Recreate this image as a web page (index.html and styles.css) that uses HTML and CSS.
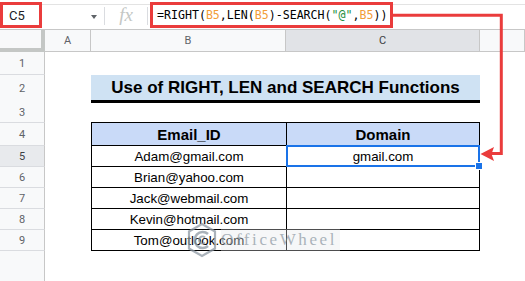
FILE: index.html
```html
<!DOCTYPE html>
<html>
<head>
<meta charset="utf-8">
<link rel="stylesheet" href="styles.css">
</head>
<body>
<div class="app">
  <div class="fbar">
    <div class="namebox">C5</div>
    <div class="dd"><span class="caret"></span></div>
    <div class="sep"></div>
    <div class="fx">fx</div>
    <div class="sep"></div>
    <div class="formula">=RIGHT(<span class="ref">B5</span>,LEN(<span class="ref">B5</span>)-SEARCH(<span class="str">"@"</span>,<span class="ref">B5</span>))</div>
  </div>
  <div class="sheet">
    <div class="row hdr"><div class="corner"></div><div class="ch">A</div><div class="ch">B</div><div class="ch sel">C</div><div class="ch"></div></div>
    <div class="row r1"><div class="rh">1</div></div>
    <div class="row r2"><div class="rh">2</div><div></div><div class="title">Use of RIGHT, LEN and SEARCH Functions</div></div>
    <div class="row r3"><div class="rh">3</div><div></div><div class="tb"></div><div class="tb"></div></div>
    <div class="row r4"><div class="rh">4</div><div></div><div class="tc th">Email_ID</div><div class="tc th c">Domain</div></div>
    <div class="row r5"><div class="rh on">5</div><div></div><div class="tc">Adam@gmail.com</div><div class="tc c active">gmail.com<span class="handle"></span></div></div>
    <div class="row r5"><div class="rh">6</div><div></div><div class="tc">Brian@yahoo.com</div><div class="tc c"></div></div>
    <div class="row r5"><div class="rh">7</div><div></div><div class="tc">Jack@webmail.com</div><div class="tc c"></div></div>
    <div class="row r5"><div class="rh">8</div><div></div><div class="tc">Kevin@hotmail.com</div><div class="tc c"></div></div>
    <div class="row r5"><div class="rh">9</div><div></div><div class="tc">Tom@outlook.com</div><div class="tc c"></div></div>
    <div class="row r10"><div class="rh last"></div></div>
  </div>
  <svg class="arrow" width="525" height="281" viewBox="0 0 525 281">
    <path d="M393 15.3 H501.3 V153.4 H490" fill="none" stroke="#ea3c3c" stroke-width="3"/>
    <polygon points="480.5,154 494,147 491.5,154 494,161" fill="#ea3c3c"/>
  </svg>
  <div class="watermark">
    <svg class="wlogo" width="32" height="36" viewBox="0 0 32 36">
      <path d="M16 2 L29 9.5 V26.5 L16 34 L3 26.5 V9.5 Z" fill="none" stroke="#8e99a4" stroke-width="2.2"/>
      <path d="M22 12 A8 8 0 1 0 22 24" fill="none" stroke="#8e99a4" stroke-width="2.6"/>
      <path d="M19 15.5 A3.5 3.5 0 1 0 19 20.5" fill="none" stroke="#8e99a4" stroke-width="2"/>
    </svg>
    <span class="wtext">OfficeWheel</span>
  </div>
</div>
</body>
</html>
```
FILE: styles.css
```css
* { box-sizing: border-box; margin: 0; padding: 0; }
body { margin: 0; background: #fff; font-family: "Liberation Sans", Arial, sans-serif; }
.app { position: relative; width: 525px; height: 281px; overflow: hidden; background: #fff; }

.fbar {
  display: flex; align-items: flex-start; height: 30px; padding-top: 2px;
  border-bottom: 1px solid #c7c7c7;
  background: linear-gradient(#e3e3e3, #e3e3e3) 0 4px / 100% 1px no-repeat;
}
.namebox {
  width: 42px; height: 26px; border: 3px solid #ea3c3c; background: #fff;
  font: 13px Roboto, "Liberation Sans", sans-serif; color: #202124;
  padding-left: 6px; display: flex; align-items: center;
}
.dd { width: 62px; height: 26px; display: flex; align-items: center; justify-content: flex-end; padding-right: 7px; }
.caret { width: 0; height: 0; border-left: 3.5px solid transparent; border-right: 3.5px solid transparent; border-top: 4px solid #5f6368; margin-top: 3px; }
.sep { width: 1px; height: 18px; margin-top: 5px; background: #dadce0; }
.fx {
  width: 42px; height: 26px; display: flex; align-items: center; justify-content: center;
  font: italic 19px "Liberation Serif", serif; color: #c4c7c5;
}
.formula {
  margin-left: 2px; width: 243px; height: 26px; border: 3px solid #ea3c3c; background: #fff;
  padding-left: 4px; display: flex; align-items: center; white-space: nowrap;
  font: 11.6px "DejaVu Sans Mono", monospace; color: #000;
}
.ref { color: #f29d38; }
.str { color: #1e8e3e; }

.row { display: grid; grid-template-columns: 45px 46px 195px 194px 45px; }
.hdr { height: 22px; }
.r1 { height: 23px; }
.r2 { height: 27px; }
.r3 { height: 21px; }
.r4 { height: 23px; }
.r5 { height: 21px; }
.r10 { height: 40px; }

.corner { background: #f8f9fa; border-right: 4px solid #c4c7c5; border-bottom: 4px solid #c4c7c5; }
.ch {
  background: #f8f9fa; border-right: 1px solid #c7c7c7; border-bottom: 1px solid #c7c7c7;
  display: flex; align-items: center; justify-content: center;
  font: 11px Roboto, sans-serif; color: #5f6368;
}
.ch.sel { background: #e1e3e7; color: #3c4043; }
.rh {
  background: #f8f9fa; border-right: 1px solid #c7c7c7; border-bottom: 1px solid #dadce0;
  display: flex; align-items: center; justify-content: center;
  font: 11px Roboto, sans-serif; color: #5f6368;
}
.rh.on { background: #e8eaed; color: #3c4043; }
.rh.last { border-bottom: none; }

.title {
  grid-column: 3 / 5; align-self: start; height: 28px;
  background: #cfe2f3; border-bottom: 3px solid #000;
  display: flex; align-items: center; justify-content: center;
  font-weight: bold; font-size: 17px; color: #000;
}
.tb { border-bottom: 1px solid #000; }
.tc {
  border-left: 1px solid #000; border-bottom: 1px solid #000;
  display: flex; align-items: center; justify-content: center;
  font-size: 13.33px; color: #000;
}
.tc.c { border-right: 1px solid #000; }
.th { background: #c9daf8; font-weight: bold; font-size: 15px; }

.active { position: relative; }
.active::after { content: ""; position: absolute; inset: -1px; border: 2px solid #1a73e8; }
.handle {
  position: absolute; right: -4px; bottom: -4px; width: 8px; height: 8px;
  background: #1a73e8; border: 1px solid #fff; z-index: 1;
}

.arrow { position: absolute; left: 0; top: 0; pointer-events: none; }

.watermark {
  position: absolute; left: 186px; top: 222px; display: flex; align-items: center; gap: 3px;
  opacity: 0.75;
}
.wtext {
  font: 17px "Liberation Serif", serif; letter-spacing: 2.6px; color: #8e99a4;
  background: rgba(230, 232, 235, 0.45); padding: 1px 3px 1px 0;
}
```
